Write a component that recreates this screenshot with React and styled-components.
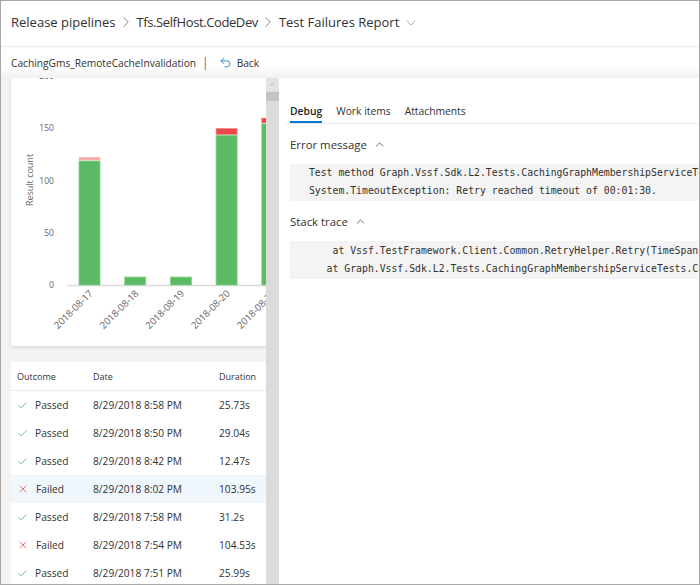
import React from "react";
import styled, { createGlobalStyle } from "styled-components";
import { ChevronRight, ChevronDown, ChevronUp, Undo2, Check, X } from "lucide-react";

const FONT = `"Segoe UI", "Open Sans", "Noto Sans", sans-serif`;
const MONO = `"DejaVu Sans Mono", "Liberation Mono", monospace`;

const GlobalStyle = createGlobalStyle`
  html, body { margin: 0; padding: 0; background: #fff; }
  body { font-family: ${FONT}; }
  * { box-sizing: border-box; }
`;

const Frame = styled.div`
  width: 700px;
  height: 585px;
  border: 1px solid #a8a8a8;
  display: flex;
  flex-direction: column;
  overflow: hidden;
  background: #fff;
  color: #323130;
  font-family: ${FONT};
`;

const Header = styled.header`
  height: 46px;
  flex-shrink: 0;
  border-bottom: 1px solid #eaeaea;
  display: flex;
  align-items: center;
  padding: 0 0 4px 10px;
`;

const Crumb = styled.span`
  font-size: 13px;
  color: #323130;
  white-space: nowrap;
  letter-spacing: ${(p) => p.$squeeze || 0};
`;

const CrumbSep = styled.span`
  display: inline-flex;
  color: #6f6f6f;
  margin: 1px 2px 0 1px;
`;

const TitleCaret = styled.span`
  display: inline-flex;
  color: #9a9896;
  margin: 2px 0 0 4px;
`;

const SubHeader = styled.div`
  height: 31px;
  flex-shrink: 0;
  display: flex;
  align-items: center;
  padding-left: 10px;
  font-size: 10.2px;
  background: linear-gradient(to bottom, #fff 0, #fff 19px, #f1f1f1 31px);
`;

const PipeMark = styled.span`
  color: #c4314b;
  font-size: 12px;
  margin: 0 10px 0 6px;
`;

const BackLink = styled.span`
  display: inline-flex;
  align-items: center;
  gap: 5px;
  color: #323130;
  svg { color: #0078d4; }
`;

const Main = styled.div`
  flex: 1;
  min-height: 0;
  display: flex;
`;

const LeftPane = styled.div`
  width: 265px;
  flex-shrink: 0;
  background: #f3f3f3;
  padding-left: 10px;
  display: flex;
  flex-direction: column;
  gap: 16px;
  overflow: hidden;
`;

const ChartCard = styled.div`
  height: 268px;
  flex-shrink: 0;
  background: #fff;
  box-shadow: 0 1.6px 3.6px rgba(0, 0, 0, 0.13), 0 0.3px 0.9px rgba(0, 0, 0, 0.1);
  svg { display: block; }
`;

const ResultsTable = styled.div`
  flex: 1;
  background: #fff;
`;

const TableRow = styled.div`
  display: grid;
  grid-template-columns: 76px 126px 1fr;
  align-items: center;
  height: ${(p) => (p.$head ? "29px" : "28px")};
  padding-left: 6px;
  font-size: ${(p) => (p.$head ? "9px" : "10.2px")};
  color: #323130;
  background: ${(p) => (p.$selected ? "#eff6fc" : "#fff")};
  border-bottom: ${(p) => (p.$head ? "1px solid #eaeaea" : "none")};
  white-space: nowrap;
`;

const Outcome = styled.span`
  display: inline-flex;
  align-items: center;
  gap: 7px;
  svg { color: ${(p) => (p.$failed ? "#e33a3a" : "#2f9a5a")}; flex-shrink: 0; }
`;

const Scrollbar = styled.div`
  width: 13px;
  flex-shrink: 0;
  background: #dbdbdb;
  display: flex;
  flex-direction: column;
`;

const ScrollArrow = styled.div`
  height: 13px;
  background: #e3e3e3;
  display: flex;
  align-items: center;
  justify-content: center;
  color: #999;
`;

const ScrollThumb = styled.div`
  height: 9px;
  margin-top: 1px;
  background: #c3c3c3;
`;

const RightPane = styled.div`
  flex: 1;
  min-width: 0;
  padding-left: 11px;
  overflow: hidden;
  display: flex;
  flex-direction: column;
`;

const TabBar = styled.div`
  display: flex;
  gap: 14px;
  margin: 23px 0 0 -4px;
  padding-left: 4px;
  border-bottom: 1px solid #eaeaea;
`;

const Tab = styled.span`
  font-size: 10.3px;
  height: 22px;
  line-height: 20px;
  border-bottom: 2px solid ${(p) => (p.$active ? "#0078d4" : "transparent")};
  font-weight: ${(p) => (p.$active ? 600 : 400)};
  color: ${(p) => (p.$active ? "#201f1e" : "#323130")};
  white-space: nowrap;
`;

const SectionTitle = styled.div`
  display: flex;
  align-items: center;
  gap: 6px;
  height: 20px;
  margin-top: 10px;
  font-size: 11.4px;
  color: #323130;
  svg { color: #323130; }
`;

const CodeBlock = styled.pre`
  margin: 10px 0 0 0;
  background: #f4f4f4;
  font-family: ${MONO};
  font-size: 9.8px;
  line-height: 18px;
  padding: ${(p) => (p.$tight ? "1px" : "0")} 0 1px 13px;
  white-space: pre;
  overflow: hidden;
  color: #323130;
`;

const bars = [
  { passed: 118.6, failed: 2.6, light: true },
  { passed: 7.6, failed: 0 },
  { passed: 7.6, failed: 0 },
  { passed: 143, failed: 5.6 },
  { passed: 154, failed: 4.6 },
];
const dates = ["2018-08-17", "2018-08-18", "2018-08-19", "2018-08-20", "2018-08-21"];

const BASE = 207;
const SCALE = 1.046;

function Chart() {
  return (
    <svg width="255" height="268" viewBox="0 0 255 268">
      {[0, 50, 100, 150, 200].map((v) => (
        <text
          key={v}
          x="43"
          y={BASE - v * SCALE + 3.2}
          textAnchor="end"
          fontSize="8.6"
          fill="#666"
          fontFamily={FONT}
        >
          {v}
        </text>
      ))}
      <text
        x="0"
        y="0"
        transform="translate(22 102) rotate(-90)"
        textAnchor="middle"
        fontSize="9"
        fill="#666"
        fontFamily={FONT}
      >
        Result count
      </text>
      <line x1="56" y1={BASE + 0.5} x2="255" y2={BASE + 0.5} stroke="#dcdcdc" strokeWidth="1.5" />
      {bars.map((b, i) => {
        const x = 68 + i * 45.7;
        const gh = b.passed * SCALE;
        const fh = b.failed * SCALE;
        const gTop = BASE - gh;
        return (
          <g key={i}>
            <rect x={x} y={gTop} width="21" height={gh} fill="#5dba64" stroke="#86cf8b" strokeWidth="0.8" />
            {b.failed > 0 && (
              <rect
                x={x}
                y={gTop - fh - 1}
                width="21"
                height={fh}
                fill={b.light ? "#f4a3a3" : "#ee4646"}
                stroke={b.light ? "#f8c4c4" : "#f27c7c"}
                strokeWidth="0.6"
              />
            )}
          </g>
        );
      })}
      {dates.map((d, i) => {
        const cx = 68 + i * 45.7 + 10.5;
        return (
          <text
            key={d}
            x="0"
            y="0"
            transform={`translate(${cx + 4} ${BASE + 9}) rotate(-45)`}
            textAnchor="end"
            fontSize="9.6"
            fill="#666"
            fontFamily={FONT}
          >
            {d}
          </text>
        );
      })}
    </svg>
  );
}

const results = [
  ["Passed", "8/29/2018 8:58 PM", "25.73s"],
  ["Passed", "8/29/2018 8:50 PM", "29.04s"],
  ["Passed", "8/29/2018 8:42 PM", "12.47s"],
  ["Failed", "8/29/2018 8:02 PM", "103.95s", true],
  ["Passed", "8/29/2018 7:58 PM", "31.2s"],
  ["Failed", "8/29/2018 7:54 PM", "104.53s"],
  ["Passed", "8/29/2018 7:51 PM", "25.99s"],
];

export default function App() {
  return (
    <>
      <GlobalStyle />
      <Frame>
        <Header>
          <Crumb>Release pipelines</Crumb>
          <CrumbSep><ChevronRight size={18} strokeWidth={1.1} /></CrumbSep>
          <Crumb $squeeze="-0.4px">Tfs.SelfHost.CodeDev</Crumb>
          <CrumbSep><ChevronRight size={18} strokeWidth={1.1} /></CrumbSep>
          <Crumb>Test Failures Report</Crumb>
          <TitleCaret><ChevronDown size={16} strokeWidth={1.2} /></TitleCaret>
        </Header>
        <SubHeader>
          <span>CachingGms_RemoteCacheInvalidation</span>
          <PipeMark>|</PipeMark>
          <BackLink>
            <Undo2 size={13} strokeWidth={1.5} />
            Back
          </BackLink>
        </SubHeader>
        <Main>
          <LeftPane>
            <ChartCard>
              <Chart />
            </ChartCard>
            <ResultsTable>
              <TableRow $head>
                <span>Outcome</span>
                <span>Date</span>
                <span>Duration</span>
              </TableRow>
              {results.map(([o, d, t, sel], i) => (
                <TableRow key={i} $selected={sel}>
                  <Outcome $failed={o === "Failed"}>
                    {o === "Failed" ? (
                      <X size={12} strokeWidth={1.4} />
                    ) : (
                      <Check size={11} strokeWidth={1.4} />
                    )}
                    {o}
                  </Outcome>
                  <span>{d}</span>
                  <span>{t}</span>
                </TableRow>
              ))}
            </ResultsTable>
          </LeftPane>
          <Scrollbar>
            <ScrollArrow><ChevronUp size={9} strokeWidth={1.5} /></ScrollArrow>
            <ScrollThumb />
          </Scrollbar>
          <RightPane>
            <TabBar>
              <Tab $active>Debug</Tab>
              <Tab>Work items</Tab>
              <Tab>Attachments</Tab>
            </TabBar>
            <SectionTitle>
              Error message <ChevronUp size={13} strokeWidth={1.3} />
            </SectionTitle>
            <CodeBlock>
{` Test method Graph.Vssf.Sdk.L2.Tests.CachingGraphMembershipServiceTests.CachingGms_RemoteCacheInvalidation threw exception:
 System.TimeoutException: Retry reached timeout of 00:01:30.`}
            </CodeBlock>
            <SectionTitle>
              Stack trace <ChevronUp size={13} strokeWidth={1.3} />
            </SectionTitle>
            <CodeBlock $tight>
{`     at Vssf.TestFramework.Client.Common.RetryHelper.Retry(TimeSpan timeout, Func\`1 action)
    at Graph.Vssf.Sdk.L2.Tests.CachingGraphMembershipServiceTests.CachingGms_RemoteCacheInvalidation()`}
            </CodeBlock>
          </RightPane>
        </Main>
      </Frame>
    </>
  );
}
